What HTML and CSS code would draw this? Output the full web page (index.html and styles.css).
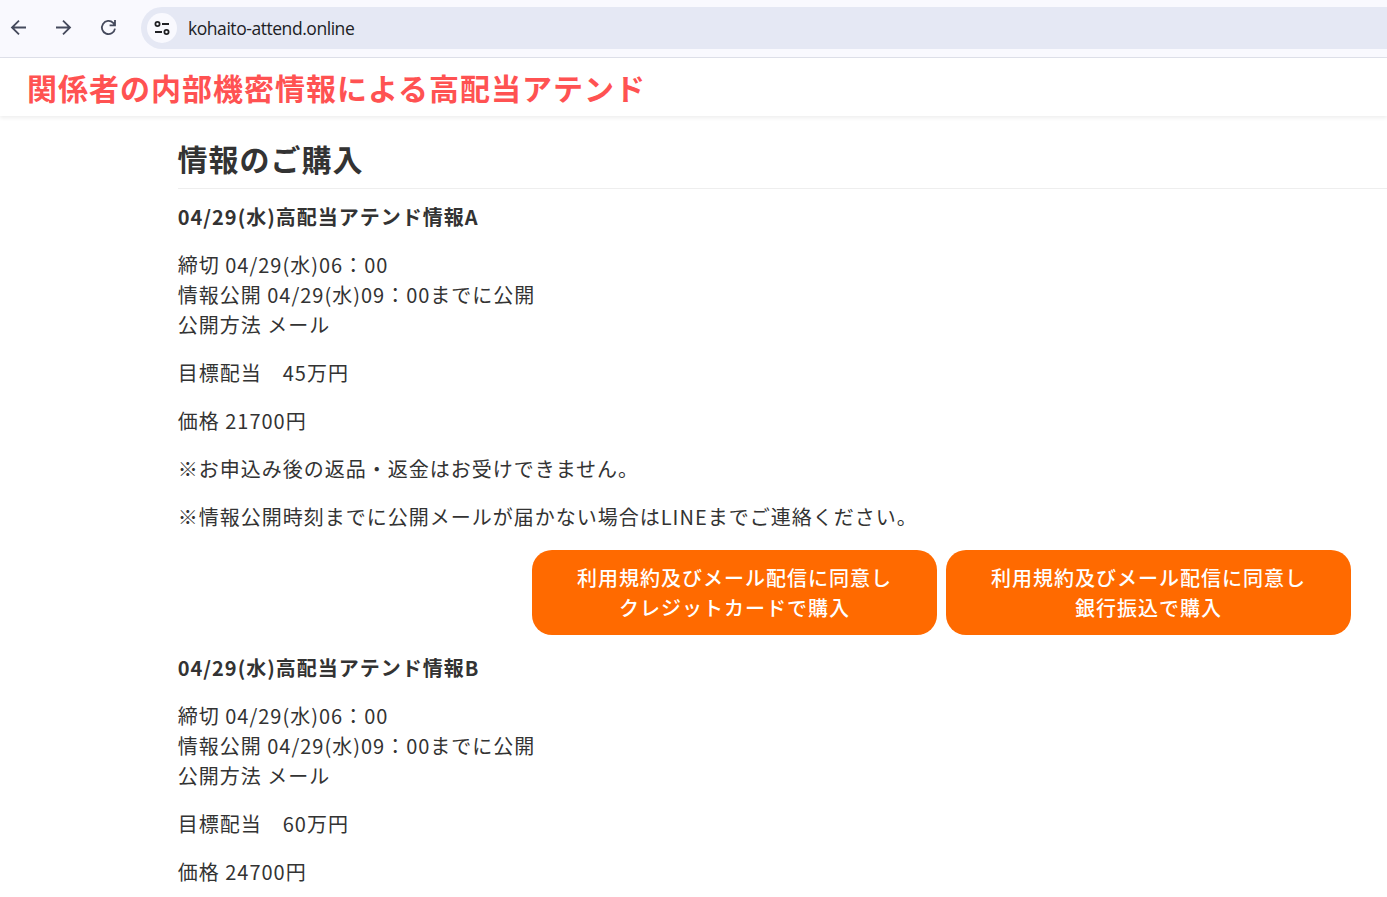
FILE: index.html
```html
<!DOCTYPE html>
<html lang="ja">
	<head>
		<meta charset="UTF-8" />
		<title>高配当アテンド</title>
		<link rel="stylesheet" href="styles.css">
	</head>
	<body>
		<div class="toolbar">
			<svg class="nav-icon" viewBox="0 0 20 20"><path d="M17 9.5H3.5M10 2.6L3 9.5L10 16.4" /></svg>
			<svg class="nav-icon" viewBox="0 0 20 20"><path d="M2 9.5H15.5M9 2.6L16 9.5L9 16.4" /></svg>
			<svg class="nav-icon" viewBox="0 0 20 20"><path d="M16 10.7A6.6 6.6 0 1 1 14.2 4.9L15.6 6.6M16 2V7.4H10.6" /></svg>
			<div class="address">
				<span class="site-info">
					<svg viewBox="0 0 18 18"><circle cx="4.5" cy="5" r="2.1" /><path d="M9 5H16M2 13H9" /><circle cx="13.5" cy="13" r="2.1" /></svg>
				</span>
				<span class="url">kohaito-attend.online</span>
			</div>
		</div>

		<header class="site-header">関係者の内部機密情報による高配当アテンド</header>

		<main class="content">
			<h1>情報のご購入</h1>

			<section class="item">
				<h2>04/29(水)高配当アテンド情報A</h2>
				<p>締切 04/29(水)06：00<br>情報公開 04/29(水)09：00までに公開<br>公開方法 メール</p>
				<p>目標配当　45万円</p>
				<p>価格 21700円</p>
				<p>※お申込み後の返品・返金はお受けできません。</p>
				<p>※情報公開時刻までに公開メールが届かない場合はLINEまでご連絡ください。</p>
				<div class="buttons">
					<button class="btn">利用規約及びメール配信に同意し<br>クレジットカードで購入</button>
					<button class="btn">利用規約及びメール配信に同意し<br>銀行振込で購入</button>
				</div>
			</section>

			<section class="item">
				<h2>04/29(水)高配当アテンド情報B</h2>
				<p>締切 04/29(水)06：00<br>情報公開 04/29(水)09：00までに公開<br>公開方法 メール</p>
				<p>目標配当　60万円</p>
				<p>価格 24700円</p>
			</section>
		</main>
	</body>
</html>
```

FILE: styles.css
```css
* {
	margin: 0;
	padding: 0;
	box-sizing: border-box;
}
body {
	height: 897px;
	overflow: hidden;
	background-color: #fff;
	color: #333;
	font-family: "Noto Sans CJK JP", sans-serif;
	font-size: 20px;
	line-height: 30px;
	letter-spacing: 1px;
}

.toolbar {
	display: flex;
	align-items: center;
	height: 58px;
	padding: 0 0 1px 9px;
	background-color: #f9f9fe;
	border-bottom: 1px solid #dfe1ea;
}
.nav-icon {
	flex: none;
	width: 20px;
	height: 20px;
	margin-right: 25px;
	fill: none;
	stroke: #454a5c;
	stroke-width: 1.8;
}
.address {
	display: flex;
	flex: 1;
	align-items: center;
	height: 42px;
	margin-left: -3px;
	padding-left: 6px;
	background-color: #e5e8f4;
	border-radius: 21px 0 0 21px;
}
.site-info {
	display: flex;
	align-items: center;
	justify-content: center;
	width: 30px;
	height: 30px;
	border-radius: 50%;
	background-color: #f9f9fe;
}
.site-info svg {
	width: 18px;
	height: 18px;
	fill: none;
	stroke: #202124;
	stroke-width: 1.8;
}
.url {
	margin-left: 11px;
	color: #202124;
	font-family: "Open Sans", "Noto Sans", sans-serif;
	font-size: 17.5px;
	letter-spacing: -0.45px;
}

.site-header {
	height: 58px;
	padding-left: 27px;
	color: #ff5252;
	font-size: 30px;
	font-weight: bold;
	line-height: 58px;
	box-shadow: 0 2px 4px rgba(0, 0, 0, 0.07);
}

.content {
	padding: 20px 0 0 178px;
}
h1 {
	height: 53px;
	border-bottom: 1px solid #eee;
	font-size: 30px;
	line-height: 45px;
	text-indent: -0.5px;
}
h2 {
	font-size: 20px;
	line-height: 30px;
}
.item {
	padding-top: 13px;
}
.item h2,
.item p {
	margin-left: -0.3px;
}
.item p {
	margin-top: 18px;
}
.buttons {
	display: flex;
	justify-content: flex-end;
	gap: 9px;
	margin: 18px 36px 5px 0;
}
.btn {
	width: 405px;
	height: 85px;
	border: none;
	border-radius: 20px;
	background-color: #ff6a00;
	color: #fff;
	font: inherit;
	font-weight: 500;
	letter-spacing: inherit;
}
```
